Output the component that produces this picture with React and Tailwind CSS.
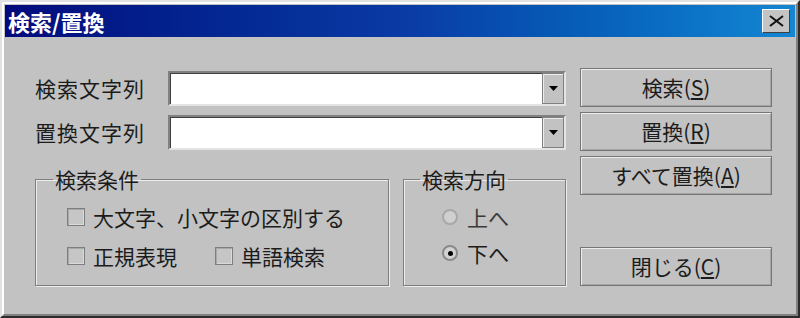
import React from "react";

const font = { fontFamily: '"Noto Sans CJK JP", "Noto Sans", sans-serif' };

function Button({ label, hot, className = "" }) {
  return (
    <button
      className={`h-[39px] w-[192px] bg-[#c2c2c2] border border-[#767676] shadow-[inset_1px_1px_0_#ececec,inset_-1px_-1px_0_#a4a4a4] text-[21px] leading-none text-[#1c1c1c] flex items-center justify-center ${className}`}
    >
      <span>
        {label}(<span className="underline underline-offset-2">{hot}</span>)
      </span>
    </button>
  );
}

function Combo() {
  return (
    <div className="flex h-[35px] w-[398px] border-2 border-t-[#808080] border-l-[#808080] border-b-[#e4e4e4] border-r-[#e4e4e4] bg-white">
      <div className="flex-1 border-t border-l border-[#404040]" />
      <div className="w-[22px] bg-[#c2c2c2] border border-[#808080] shadow-[inset_1px_1px_0_#ececec] flex items-center justify-center">
        <svg width="9" height="5" viewBox="0 0 9 5">
          <path d="M0 0 H9 L4.5 5 Z" fill="#000" />
        </svg>
      </div>
    </div>
  );
}

function Check({ label }) {
  return (
    <div className="flex items-center gap-[8px]">
      <span className="shrink-0 w-[18px] h-[18px] border border-[#7e7e7e] bg-[#c6c6c6] shadow-[inset_1px_1px_0_#a8a8a8,inset_-1px_-1px_0_#dadada]" />
      <span>{label}</span>
    </div>
  );
}

function Radio({ label, checked }) {
  return (
    <div className="flex items-center gap-[9px]">
      <span
        className={`shrink-0 w-[16px] h-[16px] rounded-full border-2 flex items-center justify-center ${
          checked ? "border-[#8a8a8a] bg-[#d2d2d2]" : "border-[#a8a8a8] bg-[#d0d0d0]"
        }`}
      >
        {checked && <span className="w-[5px] h-[5px] rounded-full bg-[#000]" />}
      </span>
      <span>{label}</span>
    </div>
  );
}

export default function App() {
  return (
    <div
      style={font}
      className="w-[800px] h-[318px] bg-[#c2c2c2] border-2 border-t-[#e2e2e2] border-l-[#e2e2e2] border-b-[#2c2c2c] border-r-[#2c2c2c] text-[#1c1c1c]"
    >
      <div className="h-full border-2 border-t-white border-l-white border-b-[#808080] border-r-[#808080] p-[1px] flex flex-col">
        {/* title bar */}
        <div className="h-[32px] flex items-center justify-between pl-[3px] pr-[5px] bg-gradient-to-r from-[#03097c] via-[#0a3aa4] to-[#1486d2]">
          <span className="text-white font-bold text-[22px] leading-none">検索/置換</span>
          <button className="w-[28px] h-[24px] bg-[#c4c4c4] border border-t-white border-l-white border-b-[#404040] border-r-[#404040] flex items-center justify-center">
            <svg width="15" height="12" viewBox="0 0 15 12">
              <path d="M1 1 L14 11 M14 1 L1 11" stroke="#111" strokeWidth="2" />
            </svg>
          </button>
        </div>

        <div className="flex pl-[30px] gap-[14px] text-[21px] leading-none">
          {/* left column */}
          <div className="w-[531px] pt-[34px] flex flex-col">
            <div className="flex items-center">
              <span className="w-[133px] tracking-[1px]">検索文字列</span>
              <Combo />
            </div>
            <div className="flex items-center mt-[9px]">
              <span className="w-[133px] tracking-[1px]">置換文字列</span>
              <Combo />
            </div>

            <div className="flex gap-[14px] mt-[18px]">
              <fieldset className="w-[354px] h-[118px] border border-[#7e7e7e] shadow-[1px_1px_0_#ececec,inset_1px_1px_0_#ececec]">
                <legend className="ml-[17px] px-[2px] leading-[22px]">検索条件</legend>
                <div className="pl-[31px] pt-[14px] flex flex-col gap-[13px]">
                  <div className="h-[26px] flex items-center">
                    <Check label="大文字、小文字の区別する" />
                  </div>
                  <div className="h-[26px] flex items-center gap-[38px]">
                    <Check label="正規表現" />
                    <Check label="単語検索" />
                  </div>
                </div>
              </fieldset>
              <fieldset className="w-[163px] h-[118px] border border-[#7e7e7e] shadow-[1px_1px_0_#ececec,inset_1px_1px_0_#ececec]">
                <legend className="ml-[16px] px-[2px] leading-[22px]">検索方向</legend>
                <div className="pl-[38px] pt-[14px] flex flex-col gap-[10px]">
                  <div className="h-[26px] flex items-center text-[#3a3a3a]">
                    <Radio label="上へ" />
                  </div>
                  <div className="h-[26px] flex items-center">
                    <Radio label="下へ" checked />
                  </div>
                </div>
              </fieldset>
            </div>
          </div>

          {/* right column */}
          <div className="pt-[31px] flex flex-col gap-[5px]">
            <Button label="検索" hot="S" />
            <Button label="置換" hot="R" />
            <Button label="すべて置換" hot="A" />
            <Button label="閉じる" hot="C" className="mt-[47px]" />
          </div>
        </div>
      </div>
    </div>
  );
}
